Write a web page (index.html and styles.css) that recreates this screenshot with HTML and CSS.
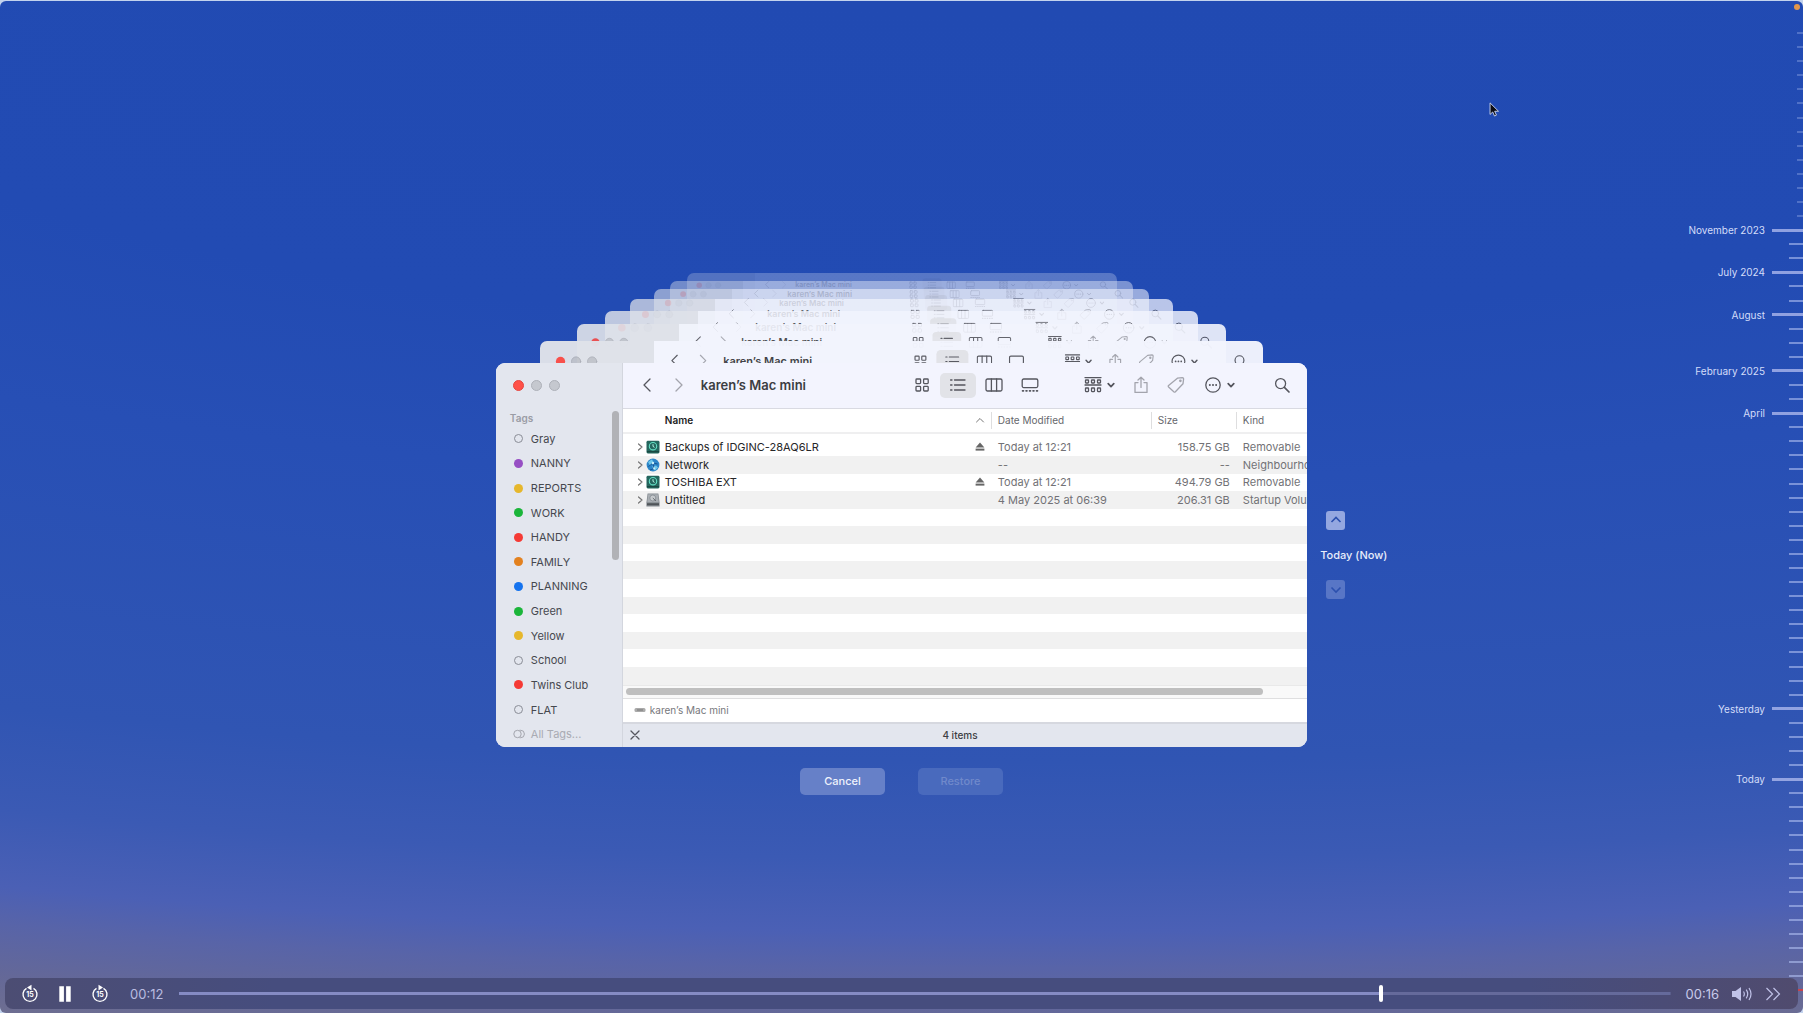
FILE: index.html
```html
<!DOCTYPE html>
<html lang="en">

<head>
    <meta charset="UTF-8">
    <meta name="viewport" content="width=device-width, initial-scale=1.0">
    <title>Time Machine</title>
    <link rel="stylesheet" href="styles.css">
</head>

<body>

    <!-- Icon set -->
    <svg class="sprite" aria-hidden="true">
        <symbol id="i-back" viewBox="0 0 18 18"><path d="M12 3L6 9l6 6" /></symbol>
        <symbol id="i-forward" viewBox="0 0 18 18"><path d="M6 3l6 6-6 6" /></symbol>
        <symbol id="i-grid" viewBox="0 0 18 18"><rect x="3" y="3" width="4.6" height="4.6" rx=".8" /><rect x="10.6" y="3" width="4.6" height="4.6" rx=".8" /><rect x="3" y="10.4" width="4.6" height="4.6" rx=".8" /><rect x="10.6" y="10.4" width="4.6" height="4.6" rx=".8" /></symbol>
        <symbol id="i-list" viewBox="0 0 18 18"><path d="M5.5 4H16M5.5 9H16M5.5 14H16M1.6 4h1.4M1.6 9h1.4M1.6 14h1.4" /></symbol>
        <symbol id="i-columns" viewBox="0 0 18 18"><rect x="1" y="3" width="16" height="12" rx="1.5" /><path d="M6.4 3v12M11.6 3v12" /></symbol>
        <symbol id="i-gallery" viewBox="0 0 18 18"><rect x="1.2" y="3" width="15.6" height="8.6" rx="1.5" /><path d="M1.6 14.8h.8M5.1 14.8h.8M8.6 14.8h.8M12.1 14.8h.8M15.6 14.8h.8" stroke-width="1.8" /></symbol>
        <symbol id="i-group" viewBox="0 0 18 18"><path d="M1 1.6h16M1 9h16" /><rect x="1.5" y="4" width="3" height="3" rx=".5" /><rect x="7.5" y="4" width="3" height="3" rx=".5" /><rect x="13.5" y="4" width="3" height="3" rx=".5" /><rect x="1.5" y="12" width="3" height="3.6" rx=".5" /><rect x="7.5" y="12" width="3" height="3.6" rx=".5" /><rect x="13.5" y="12" width="3" height="3.6" rx=".5" /></symbol>
        <symbol id="i-caret" viewBox="0 0 8 18"><path d="M1.2 7.6L4 10.6l2.8-3" stroke-width="1.7" /></symbol>
        <symbol id="i-share" viewBox="0 0 18 18"><path d="M6 6.6H3v9.8h12V6.6h-3M9 11.4V1.4M6 4l3-2.8L12 4" /></symbol>
        <symbol id="i-tag" viewBox="0 0 18 18"><path d="M10.4 2.2l5-.6q1.2 0 1.2 1.2l-.6 5-7.6 8q-.8.7-1.6 0L1.6 11q-.7-.8 0-1.6z" /><circle cx="13.4" cy="4.8" r=".7" /></symbol>
        <symbol id="i-more" viewBox="0 0 18 18"><circle cx="9" cy="9" r="7.2" /><path d="M5.8 9h.1M8.95 9h.1M12.1 9h.1" stroke-width="1.9" /></symbol>
        <symbol id="i-search" viewBox="0 0 18 18"><circle cx="7.6" cy="7.6" r="5" /><path d="M11.4 11.4l4.6 4.6" stroke-width="1.7" /></symbol>
        <symbol id="i-chevron" viewBox="0 0 8 10"><path d="M2.500 2L6 5 2.500 8" /></symbol>
        <symbol id="i-eject" viewBox="0 0 10 10"><path d="M5 .6l4.400 5H.6z" fill="#666" stroke="none" /><rect x=".6" y="6.600" width="8.800" height="2" fill="#666" stroke="none" /></symbol>

        <symbol id="i-backup" viewBox="0 0 14 14">
            <rect x=".5" y=".8" width="13" height="12.7" rx="1.4" fill="#24665e" stroke="none" />
            <path d="M1 11.6h12" stroke="#194842" stroke-width="1.4" />
            <circle cx="7" cy="6.2" r="3.7" fill="none" stroke="#63dfc4" stroke-width="1.1" />
            <path d="M7 4.2v2.2l1.5 1" fill="none" stroke="#b4f6e6" />
        </symbol>
        <symbol id="i-network" viewBox="0 0 14 14">
            <circle cx="7" cy="7" r="6.4" fill="#2c86c9" stroke="none" />
            <path d="M2 4l4-2.8 1.4 3L4 7.4zM6 8.6l4-1 2 2L9 12.8z" fill="#6fc7ea" stroke="none" />
            <path d="M2.4 8.6L7 5l4.6 1M7 5l1 5.6L4 12" stroke="#15508f" stroke-width=".9" fill="none" />
            <circle cx="7" cy="5" r="1.2" fill="#c8f0fa" stroke="none" /><circle cx="8.2" cy="10.4" r="1.1" fill="#c8f0fa" stroke="none" />
        </symbol>
        <symbol id="i-disk" viewBox="0 0 14 14">
            <path d="M1.6.6h10.8l1.2 9v3.8H.4V9.6z" fill="#858b91" stroke="none" />
            <path d="M2.2 1.2h9.6l1 8H1.2z" fill="#a9aeb3" stroke="none" />
            <circle cx="6.8" cy="5" r="3" fill="#c6cacd" stroke="#7d8389" stroke-width=".7" />
            <path d="M6.8 5L10 8" stroke="#5d6369" stroke-width=".9" />
            <path d="M1 11.3h12" stroke="#4f5459" stroke-width="2" />
        </symbol>

        <!-- Toolbar pieces for the windows further back -->
        <symbol id="ghost-left" viewBox="0 0 205 45">
            <circle cx="23" cy="23" r="5.2" fill="#ff5148" stroke="none" /><circle cx="40.5" cy="23" r="5.2" fill="#c2c5cc" stroke="#a9acb4" stroke-width=".8" /><circle cx="58.5" cy="23" r="5.2" fill="#c2c5cc" stroke="#a9acb4" stroke-width=".8" />
            <use href="#i-back" x="142" y="13" width="18" height="18" /><use href="#i-forward" x="174" y="13" width="18" height="18" opacity=".5" />
        </symbol>
        <symbol id="ghost-right" viewBox="0 0 400 45">
            <rect x="33" y="10" width="36" height="25" rx="5" fill="#e2e3e8" stroke="none" />
            <use href="#i-grid" x="6" y="14" width="18" height="18" /><use href="#i-list" x="42" y="14" width="18" height="18" /><use href="#i-columns" x="78" y="14" width="18" height="18" /><use href="#i-gallery" x="114" y="14" width="18" height="18" />
            <use href="#i-group" x="177" y="14" width="18" height="18" /><use href="#i-caret" x="200" y="14" width="8" height="18" />
            <g opacity=".5"><use href="#i-share" x="225" y="14" width="18" height="18" /><use href="#i-tag" x="260" y="14" width="18" height="18" /></g>
            <use href="#i-more" x="296" y="14" width="18" height="18" /><use href="#i-caret" x="319" y="14" width="8" height="18" />
            <use href="#i-search" x="366" y="14" width="18" height="18" />
        </symbol>
    </svg>

    <div class="screen">

        <main class="stage">
            <div class="row">
                <div class="stack">
                    <div class="ghost depth-7"><svg class="icon ghost-left"><use href="#ghost-left" /></svg><span>karen’s Mac mini</span><svg class="icon ghost-right"><use href="#ghost-right" /></svg></div>
                    <div class="ghost depth-6"><svg class="icon ghost-left"><use href="#ghost-left" /></svg><span>karen’s Mac mini</span><svg class="icon ghost-right"><use href="#ghost-right" /></svg></div>
                    <div class="ghost depth-5"><svg class="icon ghost-left"><use href="#ghost-left" /></svg><span>karen’s Mac mini</span><svg class="icon ghost-right"><use href="#ghost-right" /></svg></div>
                    <div class="ghost depth-4"><svg class="icon ghost-left"><use href="#ghost-left" /></svg><span>karen’s Mac mini</span><svg class="icon ghost-right"><use href="#ghost-right" /></svg></div>
                    <div class="ghost depth-3"><svg class="icon ghost-left"><use href="#ghost-left" /></svg><span>karen’s Mac mini</span><svg class="icon ghost-right"><use href="#ghost-right" /></svg></div>
                    <div class="ghost depth-2"><svg class="icon ghost-left"><use href="#ghost-left" /></svg><span>karen’s Mac mini</span><svg class="icon ghost-right"><use href="#ghost-right" /></svg></div>
                    <div class="ghost depth-1"><svg class="icon ghost-left"><use href="#ghost-left" /></svg><span>karen’s Mac mini</span><svg class="icon ghost-right"><use href="#ghost-right" /></svg></div>

                    <section class="window">
                        <aside class="sidebar">
                            <div class="lights">
                                <button type="button" class="light close" aria-label="Close"></button>
                                <button type="button" class="light" aria-label="Minimise"></button>
                                <button type="button" class="light" aria-label="Zoom"></button>
                            </div>
                            <div class="tags">
                                <div class="tag-list">
                                    <h2>Tags</h2>
                                    <a href="#"><i class="dot empty"></i>Gray</a>
                                    <a href="#"><i class="dot purple"></i>NANNY</a>
                                    <a href="#"><i class="dot yellow"></i>REPORTS</a>
                                    <a href="#"><i class="dot green"></i>WORK</a>
                                    <a href="#"><i class="dot red"></i>HANDY</a>
                                    <a href="#"><i class="dot orange"></i>FAMILY</a>
                                    <a href="#"><i class="dot blue"></i>PLANNING</a>
                                    <a href="#"><i class="dot green"></i>Green</a>
                                    <a href="#"><i class="dot yellow"></i>Yellow</a>
                                    <a href="#"><i class="dot empty"></i>School</a>
                                    <a href="#"><i class="dot red"></i>Twins Club</a>
                                    <a href="#"><i class="dot empty"></i>FLAT</a>
                                    <a href="#" class="all-tags"><svg class="all-icon" viewBox="0 0 12 10"><circle cx="4.5" cy="5" r="3.7" /><path d="M6.5 1.3h1.2a3.7 3.7 0 010 7.4H6.5" /></svg>All Tags...</a>
                                </div>
                                <div class="side-thumb"></div>
                            </div>
                        </aside>

                        <div class="content">
                            <header class="toolbar">
                                <button type="button" aria-label="Back"><svg class="icon"><use href="#i-back" /></svg></button>
                                <button type="button" class="dim forward" aria-label="Forward"><svg class="icon"><use href="#i-forward" /></svg></button>
                                <h1>karen’s Mac mini</h1>
                                <div class="views">
                                    <button type="button" aria-label="Icons"><svg class="icon"><use href="#i-grid" /></svg></button>
                                    <button type="button" class="active" aria-label="List"><svg class="icon"><use href="#i-list" /></svg></button>
                                    <button type="button" aria-label="Columns"><svg class="icon"><use href="#i-columns" /></svg></button>
                                    <button type="button" class="split" aria-label="Gallery"><svg class="icon"><use href="#i-gallery" /></svg></button>
                                </div>
                                <div class="tools">
                                    <button type="button" aria-label="Group"><svg class="icon"><use href="#i-group" /></svg><svg class="icon caret"><use href="#i-caret" /></svg></button>
                                    <button type="button" class="dim" aria-label="Share"><svg class="icon"><use href="#i-share" /></svg></button>
                                    <button type="button" class="dim" aria-label="Edit tags"><svg class="icon"><use href="#i-tag" /></svg></button>
                                </div>
                                <button type="button" class="more" aria-label="More"><svg class="icon"><use href="#i-more" /></svg><svg class="icon caret"><use href="#i-caret" /></svg></button>
                                <button type="button" aria-label="Search"><svg class="icon"><use href="#i-search" /></svg></button>
                            </header>

                            <table class="files">
                                <colgroup>
                                    <col class="col-name">
                                    <col class="col-date">
                                    <col class="col-size">
                                    <col>
                                </colgroup>
                                <thead>
                                    <tr>
                                        <th class="name"><div class="cell">Name<svg class="icon sort" viewBox="0 0 10 8"><path d="M1.5 6L5 2.5 8.5 6" /></svg></div></th>
                                        <th><div class="cell">Date Modified</div></th>
                                        <th><div class="cell">Size</div></th>
                                        <th><div class="cell">Kind</div></th>
                                    </tr>
                                </thead>
                                <tbody id="fileRows"></tbody>
                            </table>

                            <div class="scroll"><div class="scroll-thumb"></div></div>
                            <div class="path">
                                <svg viewBox="0 0 12 6"><rect x=".5" y="1" width="11" height="4" rx="1.5" fill="#aaa" /><path d="M3 3h6" stroke="#777" /></svg>
                                karen’s Mac mini
                            </div>
                            <footer class="status">
                                <button type="button" aria-label="Stop"><svg class="icon" viewBox="0 0 10 10"><path d="M1 1l8 8M9 1L1 9" /></svg></button>
                                <span>4 items</span>
                            </footer>
                        </div>
                    </section>
                </div>

                <nav class="jump">
                    <button type="button" aria-label="Earlier"><svg viewBox="0 0 18 18"><path d="M4.5 11L9 6.5l4.5 4.5" /></svg></button>
                    <span>Today (Now)</span>
                    <button type="button" disabled aria-label="Later"><svg viewBox="0 0 18 18"><path d="M4.5 7.5L9 12l4.5-4.5" /></svg></button>
                </nav>
            </div>

            <div class="actions">
                <button type="button">Cancel</button>
                <button type="button" disabled>Restore</button>
            </div>
        </main>

        <ol class="timeline" id="timeline"></ol>

        <div class="player">
            <button type="button" aria-label="Back 15 seconds"><svg viewBox="0 0 20 20"><path d="M6.5 4.3a7 7 0 107 0" /><path d="M7 3.600L11.5.8v5.6z" fill="#fff" stroke="none" /><text x="10" y="13">15</text></svg></button>
            <button type="button" aria-label="Pause"><svg viewBox="0 0 20 20"><path d="M4.3 2.3h4.6v15.400H4.3zM11.1 2.300h4.6v15.400h-4.6z" fill="#fff" stroke="none" /></svg></button>
            <button type="button" aria-label="Forward 15 seconds"><svg viewBox="0 0 20 20"><path d="M6.5 4.3a7 7 0 107 0" /><path d="M13 3.6L8.5.8v5.6z" fill="#fff" stroke="none" /><text x="10" y="13">15</text></svg></button>
            <span class="elapsed">00:12</span>
            <input type="range" min="0" max="1000" value="807" aria-label="Position" style="--played: 80.7%">
            <span class="total">00:16</span>
            <button type="button" class="soft" aria-label="Volume"><svg class="volume" viewBox="0 0 22 18"><path d="M1 6h3.5L10 2v14l-5.5-4H1z" fill="#c0c2e8" stroke="none" /><path d="M12.5 6.5q1.7 2.500 0 5M15.2 4.7q3 4.3 0 8.6M18 3q4 6 0 12" /></svg></button>
            <button type="button" class="soft" aria-label="More controls"><svg viewBox="0 0 20 20"><path d="M3.5 4l6 6-6 6M10.5 4l6 6-6 6" /></svg></button>
        </div>

        <span class="mic-dot"></span>
        <svg class="cursor" viewBox="0 0 12 18"><path d="M1 1v13l3-2.800 2 4.600 2.200-1L6.200 10.400h4.300z" /></svg>
    </div>

    <script>
        const files = [
            { icon: "backup", name: "Backups of IDGINC-28AQ6LR", eject: true, date: "Today at 12:21", size: "158.75 GB", kind: "Removable" },
            { icon: "network", name: "Network", date: "--", size: "--", kind: "Neighbourhood" },
            { icon: "backup", name: "TOSHIBA EXT", eject: true, date: "Today at 12:21", size: "494.79 GB", kind: "Removable" },
            { icon: "disk", name: "Untitled", date: "4 May 2025 at 06:39", size: "206.31 GB", kind: "Startup Volume" }
        ];
        const rowCount = 14;

        function fillRows() {
            const body = document.getElementById("fileRows");
            for (let i = 0; i < rowCount; i++) {
                const row = document.createElement("tr");
                const file = files[i];
                if (file) {
                    const eject = file.eject ? `<svg class="eject"><use href="#i-eject" /></svg>` : "";
                    row.innerHTML = `
                        <td><div class="name-cell"><svg class="icon open"><use href="#i-chevron" /></svg><svg class="file-icon"><use href="#i-${file.icon}" /></svg><span>${file.name}</span>${eject}</div></td>
                        <td>${file.date}</td><td class="size">${file.size}</td><td>${file.kind}</td>`;
                } else {
                    row.innerHTML = `<td colspan="4"></td>`;
                }
                body.appendChild(row);
            }
        }

        // tick index -> label, counted from the top of the screen
        const labels = { 14: "November 2023", 17: "July 2024", 20: "August", 24: "February 2025", 27: "April", 48: "Yesterday", 53: "Today" };
        const tickCount = 69;

        function fillTimeline() {
            const timeline = document.getElementById("timeline");
            for (let i = 0; i < tickCount; i++) {
                const tick = document.createElement("li");
                if (labels[i]) {
                    tick.className = "major";
                    tick.textContent = labels[i];
                } else if (i < 14) {
                    tick.className = "faint";
                } else if (i === tickCount - 1) {
                    tick.className = "now";
                }
                timeline.appendChild(tick);
            }
        }

        fillRows();
        fillTimeline();
    </script>

</body>

</html>
```
FILE: styles.css
```css
* {
    box-sizing: border-box;
}

body {
    margin: 0;
    padding-top: 1px;
    background: #c3d3ee;
    font-family: Inter, "Liberation Sans", sans-serif;
    font-size: 12px;
    color: #3c3d42;
}

button {
    display: flex;
    align-items: center;
    justify-content: center;
    padding: 0;
    border: none;
    background: none;
    font: inherit;
    color: inherit;
}

svg {
    display: block;
    fill: none;
}

.sprite {
    position: absolute;
    width: 0;
    height: 0;
}

.icon {
    width: 18px;
    height: 18px;
    stroke: #55565e;
    stroke-width: 1.3;
    stroke-linecap: round;
    stroke-linejoin: round;
}

/* Everything on the desktop shares one grid cell */
.screen {
    position: relative;
    display: grid;
    grid-template: minmax(0, 1fr) / minmax(0, 1fr);
    height: calc(100vh - 1px);
    min-height: 860px;
    border-radius: 6px;
    overflow: hidden;
    background: radial-gradient(ellipse 220% 120% at 55% -10%, #214ab2 9%, #224bb3 35%, #274fb5 48%, #3055b3 71%, #3b5ab4 79%, #4b60b5 85%, #5864a8 88%, #646898 92%, #77748a 98%);
}

.stage,
.timeline,
.player {
    grid-area: 1 / 1;
}

.stage {
    padding-top: calc(27vh - 2px);
}

.row {
    display: grid;
    grid-template-columns: 1fr 45vw 1fr;
}

/* Window stack */
.stack {
    grid-column: 2;
    display: grid;
    justify-items: center;
}

.ghost,
.window {
    grid-area: 1 / 1;
}

.ghost {
    display: flex;
    align-items: flex-start;
    margin-bottom: 360px;
    border-radius: 7px 7px 0 0;
    overflow: hidden;
    background: linear-gradient(to right, #e0e3ea 15.7%, #f3f5fe 15.7%);
    font-weight: 600;
    white-space: nowrap;
}

.ghost span {
    flex: 1;
}

.ghost-left {
    width: 25.3%;
    height: auto;
    aspect-ratio: 205 / 45;
}

.ghost-right {
    width: 49.3%;
    height: auto;
    aspect-ratio: 400 / 45;
}

.depth-1 {
    width: 89%;
    margin-top: 68px;
    opacity: 0.97;
    font-size: 11px;
    line-height: 40px;
}

.depth-2 {
    width: 80%;
    margin-top: 51px;
    opacity: 0.9;
    font-size: 10px;
    line-height: 36px;
}

.depth-3 {
    width: 73%;
    margin-top: 38px;
    opacity: 0.82;
    font-size: 10px;
    line-height: 33px;
}

.depth-4 {
    width: 67%;
    margin-top: 26px;
    opacity: 0.72;
    font-size: 9px;
    line-height: 30px;
}

.depth-5 {
    width: 61%;
    margin-top: 16px;
    opacity: 0.56;
    font-size: 8px;
    line-height: 28px;
}

.depth-6 {
    width: 57%;
    margin-top: 8px;
    opacity: 0.42;
    font-size: 8px;
    line-height: 26px;
}

.depth-7 {
    width: 53%;
    opacity: 0.26;
    font-size: 7px;
    line-height: 24px;
}

.window {
    display: flex;
    width: 100%;
    margin-top: 90px;
    border-radius: 9px;
    overflow: hidden;
    background: #fff;
    z-index: 1;
}

/* Sidebar */
.sidebar {
    display: flex;
    flex-direction: column;
    flex: none;
    width: 127px;
    border-right: 1px solid #d3d6de;
    background: #e3e6ee;
}

.lights {
    display: flex;
    align-items: center;
    gap: 7px;
    height: 46px;
    padding-left: 17px;
}

.light {
    width: 11px;
    height: 11px;
    border: 1px solid #aeb1b9;
    border-radius: 50%;
    background: #c5c8cf;
}

.light.close {
    border-color: #e64540;
    background: #ff5148;
}

.tags {
    display: flex;
    flex: 1;
}

.tag-list {
    display: flex;
    flex-direction: column;
    flex: 1;
    font-size: 11px;
}

.tag-list h2 {
    margin: 0;
    padding-left: 14px;
    font-size: 10px;
    line-height: 18px;
    font-weight: 600;
    color: #9a9ca5;
}

.tag-list a {
    display: flex;
    flex: 1;
    align-items: center;
    gap: 8px;
    padding-left: 18px;
    color: #46484e;
    text-decoration: none;
    white-space: nowrap;
}

.dot {
    width: 9px;
    height: 9px;
    border-radius: 50%;
}

.empty {
    border: 1px solid #8a8d96;
}

.purple {
    background: #974fc4;
}

.yellow {
    background: #e6b72c;
}

.green {
    background: #1bb53a;
}

.red {
    background: #f53a35;
}

.orange {
    background: #e3811f;
}

.blue {
    background: #1573ee;
}

.tag-list .all-tags {
    gap: 6px;
    padding-left: 17px;
    color: #a9abb3;
}

.all-icon {
    width: 12px;
    height: 10px;
    stroke: #a3a5ad;
}

.side-thumb {
    width: 7px;
    height: 149px;
    margin: 2px 3px 0 0;
    border-radius: 4px;
    background: #b1b2b6;
}

/* Toolbar */
.content {
    display: flex;
    flex-direction: column;
    flex: 1;
    min-width: 0;
}

.toolbar {
    display: flex;
    align-items: center;
    height: 46px;
    padding: 0 16px 0 15px;
    border-bottom: 1px solid #d9dae2;
    background: #f3f4fe;
}

.toolbar .forward {
    margin: 0 13px 0 14px;
}

.toolbar h1 {
    flex: 1;
    margin: 0;
    font-size: 13px;
    font-weight: 600;
    white-space: nowrap;
}

.dim {
    opacity: 0.5;
}

.views {
    display: flex;
    margin-right: 36px;
}

.views button {
    width: 36px;
    height: 25px;
    border-radius: 5px;
}

.views .active {
    background: #e2e3e8;
}

.tools {
    display: flex;
    gap: 17px;
}

.tools button,
.more {
    gap: 5px;
}

.more {
    margin: 0 38px 0 19px;
}

.caret {
    width: 8px;
}

/* File list */
.files {
    width: 100%;
    height: 276px;
    border-collapse: collapse;
    table-layout: fixed;
}

.col-name {
    width: 368px;
}

.col-date {
    width: 160px;
}

.col-size {
    width: 85px;
}

.files th {
    height: 30px;
    padding: 0;
    font-size: 10px;
    font-weight: 400;
    text-align: left;
    color: #66676c;
    vertical-align: top;
}

.cell {
    display: flex;
    align-items: center;
    height: 25px;
    padding-left: 7px;
    border-bottom: 2px solid #efeff0;
    background: linear-gradient(#dededf, #dededf) left 3px / 1px 17px no-repeat;
}

.name .cell {
    justify-content: space-between;
    padding: 0 6px 0 42px;
    background: none;
    color: #222;
    font-weight: 600;
}

.sort {
    width: 10px;
    height: 8px;
    stroke: #777;
    stroke-width: 1;
}

.files td {
    height: 17px;
    padding: 0 6px 0 7px;
    font-size: 11px;
    line-height: 16px;
    color: #727276;
    white-space: nowrap;
}

.files td:last-child {
    padding-right: 0;
    overflow: hidden;
}

.files tbody tr:nth-child(even) {
    background: #f1f1f1;
}

.files .size {
    text-align: right;
}

.name-cell {
    display: flex;
    align-items: center;
    margin-left: 6px;
    color: #262628;
}

.open {
    width: 8px;
    height: 10px;
    stroke: #777;
    stroke-width: 1.2;
}

.file-icon {
    width: 14px;
    height: 14px;
    margin: 0 5px 0 2px;
}

.eject {
    width: 10px;
    height: 10px;
    margin-left: auto;
}

.scroll {
    padding: 2px 3px 3px;
    border-top: 1px solid #e9e9e9;
    border-bottom: 1px solid #dfdfe0;
    background: #f9f9f9;
}

.scroll-thumb {
    width: 94%;
    height: 7px;
    border-radius: 4px;
    background: #bfbfbf;
}

.path {
    display: flex;
    align-items: center;
    gap: 4px;
    height: 23px;
    padding-left: 11px;
    font-size: 10px;
    color: #77787c;
}

.path svg {
    width: 12px;
    height: 6px;
}

.status {
    display: grid;
    grid-template-columns: 24px 1fr 34px;
    align-items: center;
    height: 25px;
    border-top: 2px solid #d6d8df;
    background: #e3e6ee;
    font-size: 10px;
    font-weight: 500;
    text-align: center;
}

.status .icon {
    width: 10px;
    height: 10px;
}

/* Earlier / later buttons */
.jump {
    display: flex;
    flex-direction: column;
    align-items: flex-start;
    align-self: center;
    gap: 17px;
    margin-top: 90px;
    padding-left: 13px;
    color: #e8edfb;
    font-size: 11px;
    font-weight: 500;
    line-height: 16px;
}

.jump button {
    width: 19px;
    height: 19px;
    margin-left: 6px;
    border-radius: 3px;
    background: #94a7e0;
}

.jump button:disabled {
    background: #5876c6;
}

.jump svg {
    width: 18px;
    height: 18px;
    stroke: #2c50ae;
    stroke-width: 1.6;
}

.actions {
    display: flex;
    justify-content: center;
    gap: 33px;
    padding-top: 21px;
}

.actions button {
    width: 85px;
    height: 27px;
    border-radius: 5px;
    background: #6680c8;
    color: #f0f3fc;
    font-size: 11px;
    font-weight: 500;
}

.actions button:disabled {
    background: #496abd;
    color: #7089cb;
}

/* Timeline */
.timeline {
    display: flex;
    flex-direction: column;
    justify-self: end;
    width: 130px;
    margin: 25px 0 16px;
    padding: 0;
    list-style: none;
}

.timeline li {
    display: flex;
    flex: 1;
    align-items: center;
    justify-content: flex-end;
    gap: 7px;
    min-height: 0;
    font-size: 10px;
    line-height: 12px;
    color: #d3dcf9;
    white-space: nowrap;
}

.timeline li::after {
    content: "";
    width: 14px;
    height: 2px;
    background: rgba(175, 190, 240, 0.6);
}

.timeline .major::after {
    width: 31px;
    height: 3px;
    background: rgba(180, 190, 240, 0.75);
}

.timeline .faint::after {
    width: 6px;
    background: rgba(150, 170, 230, 0.4);
}

.timeline .now::after {
    background: #c8434c;
}

/* Video controls */
.player {
    display: flex;
    align-items: center;
    align-self: end;
    height: 31px;
    margin: 0 5px 4px;
    padding: 0 15px;
    border-radius: 8px;
    background: linear-gradient(to right, #4c4d73, #464d7e 15%, #464d7e 85%, #504b6e);
    color: #b9bce0;
    font-size: 13px;
    z-index: 2;
}

.player svg {
    width: 20px;
    height: 20px;
    stroke: #fff;
    stroke-width: 1.4;
}

.player text {
    fill: #fff;
    stroke: none;
    font-size: 7px;
    font-weight: 700;
    text-anchor: middle;
}

.player button {
    margin-right: 15px;
}

.elapsed {
    margin: 0 16px 0 5px;
}

.total {
    margin: 0 12px 0 15px;
    color: #c8caea;
}

.player .volume {
    width: 22px;
    height: 18px;
}

.player .soft {
    margin-right: 0;
}

.soft + .soft {
    margin-left: 10px;
}

.player .soft svg {
    stroke: #c0c2e8;
    stroke-width: 1.2;
}

.player input {
    flex: 1;
    min-width: 0;
    height: 17px;
    margin: 0;
    appearance: none;
    background: linear-gradient(to right, #858bc4 var(--played), #656a9b var(--played)) center / 100% 3px no-repeat;
}

.player input::-webkit-slider-thumb {
    appearance: none;
    width: 4px;
    height: 17px;
    border-radius: 2px;
    background: #fff;
}

/* Overlays */
.mic-dot {
    position: absolute;
    top: 3px;
    right: 3px;
    width: 6px;
    height: 6px;
    border-radius: 50%;
    background: #e2964a;
}

.cursor {
    position: absolute;
    top: 10%;
    left: 83%;
    width: 11px;
    height: 16px;
    margin-left: -7px;
    fill: #0b0b12;
    stroke: #d5dcf2;
}
```
